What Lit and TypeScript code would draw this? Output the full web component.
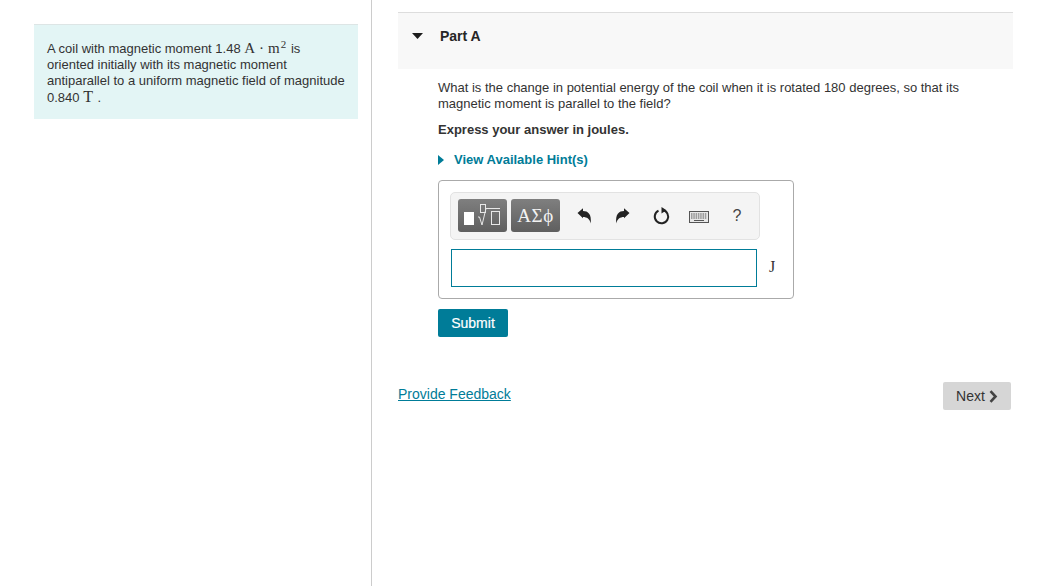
import { LitElement, html, css } from 'lit';
import { customElement } from 'lit/decorators.js';

@customElement('app-root')
export class AppRoot extends LitElement {
  static styles = css`
    :host {
      display: flex;
      width: 1038px;
      height: 586px;
      overflow: hidden;
      background: #fff;
      color: #333;
      font-family: 'Liberation Sans', Arial, sans-serif;
      font-size: 13px;
      line-height: 16px;
    }

    .left {
      box-sizing: border-box;
      width: 372px;
      height: 586px;
      flex: none;
      padding: 24px 13px 0 34px;
      border-right: 1px solid #ccc;
    }

    .intro {
      box-sizing: border-box;
      height: 95px;
      padding: 15px 13px 0;
      background: #e3f5f5;
      border-top: 1px solid #dde5e5;
    }

    .intro p {
      margin: 0;
    }

    .math {
      display: inline-block;
      height: 16px;
      line-height: 16px;
      font-family: 'Liberation Serif', 'DejaVu Serif', serif;
      font-size: 15px;
      color: #333;
    }

    .math.t {
      font-size: 16px;
      margin-right: 1px;
    }

    .dot {
      margin: 0 4px;
    }

    sup {
      display: inline-block;
      margin: -1px 1px 0 1px;
      font-size: 11px;
      line-height: 11px;
      vertical-align: top;
    }

    .right {
      flex: none;
      box-sizing: border-box;
      width: 615px;
      margin: 12px 0 0 26px;
    }

    .part-head {
      box-sizing: border-box;
      display: flex;
      height: 57px;
      padding: 15px 0 0 14px;
      gap: 17px;
      background: #f8f8f8;
      border-top: 1px solid #ddd;
      font-weight: bold;
      font-size: 14px;
      color: #262626;
    }

    .part-head svg {
      width: 11px;
      height: 6px;
      margin-top: 5px;
    }

    .part-body {
      padding: 11px 0 0 40px;
    }

    .part-body p {
      margin: 0 0 10px;
    }

    .hint {
      display: flex;
      align-items: center;
      gap: 10px;
      margin-top: 14px;
      font-weight: bold;
      color: #007c98;
    }

    .hint svg {
      width: 6px;
      height: 10px;
    }

    .answer {
      box-sizing: border-box;
      width: 356px;
      height: 119px;
      margin-top: 12px;
      padding: 11px 0 0 11px;
      border: 1px solid #aaa;
      border-radius: 4px;
    }

    .toolbar {
      box-sizing: border-box;
      display: flex;
      align-items: center;
      width: 310px;
      height: 48px;
      padding: 0 0 1px 7px;
      background: #f4f4f4;
      border: 1px solid #e2e2e2;
      border-radius: 5px;
    }

    .tpl {
      display: flex;
      align-items: center;
      justify-content: center;
      box-sizing: border-box;
      width: 49px;
      height: 33px;
      background: linear-gradient(#7f7f7f, #5f5f5f);
      border-radius: 3px;
      color: #f2f2f2;
    }

    .tpl.greek {
      margin-left: 4px;
      font-family: 'Liberation Serif', serif;
      font-size: 19px;
      letter-spacing: 0.6px;
    }

    .tool {
      display: flex;
      justify-content: center;
      align-items: center;
      width: 38px;
      height: 32px;
      color: #333;
    }

    .tool.undo {
      margin-left: 5px;
    }

    .tool.reload svg {
      margin: 1px 0 0 4px;
    }

    .tool.keys svg {
      margin: 3px 0 0 2px;
    }

    .tool.help {
      margin-left: 1px;
      font-size: 16px;
      color: #444;
    }

    .input-row {
      display: flex;
      margin-top: 9px;
      padding-left: 1px;
      gap: 12px;
    }

    .input {
      box-sizing: border-box;
      width: 306px;
      height: 38px;
      border: 1px solid #007c98;
      background: #fff;
    }

    .unit {
      font-family: 'Liberation Serif', serif;
      font-size: 16px;
      line-height: 36px;
      color: #333;
    }

    .submit {
      display: block;
      box-sizing: border-box;
      width: 70px;
      height: 28px;
      margin-top: 10px;
      padding: 0;
      border: 0;
      border-radius: 2px;
      background: #007c98;
      color: #fff;
      font: 14px/28px 'Liberation Sans', Arial, sans-serif;
      -webkit-text-stroke: 0.2px #fff;
    }

    .foot {
      display: flex;
      justify-content: space-between;
      align-items: center;
      margin-top: 45px;
      padding-right: 2px;
    }

    .foot a {
      color: #007c98;
      font-size: 14px;
      text-decoration: underline;
      margin-top: -4px;
    }

    .next {
      display: flex;
      align-items: center;
      justify-content: center;
      gap: 3px;
      box-sizing: border-box;
      width: 68px;
      height: 28px;
      background: #d6d6d6;
      border-radius: 2px;
      color: #333;
      font-size: 14px;
    }

    .next svg {
      width: 10px;
      height: 13px;
    }
  `;

  render() {
    return html`
      <div class="left">
        <div class="intro">
          <p>
            A coil with magnetic moment 1.48
            <span class="math">A<span class="dot">·</span>m<sup>2</sup></span> is oriented initially
            with its magnetic moment antiparallel to a uniform magnetic field of magnitude 0.840
            <span class="math t">T</span> .
          </p>
        </div>
      </div>
      <div class="right">
        <div class="part-head">
          <svg viewBox="0 0 11 6"><path d="M0 0h11L5.500 6z" fill="#1d1d1d" /></svg>
          <span>Part A</span>
        </div>
        <div class="part-body">
          <p>
            What is the change in potential energy of the coil when it is rotated 180 degrees, so
            that its magnetic moment is parallel to the field?
          </p>
          <p><b>Express your answer in joules.</b></p>
          <div class="hint">
            <svg viewBox="0 0 6 10"><path d="M0 0l6 5-6 5z" fill="#007c98" /></svg>
            <span>View Available Hint(s)</span>
          </div>
          <div class="answer">
            <div class="toolbar">
              <div class="tpl">
                <svg width="49" height="33" viewBox="0 0 49 33" fill="none">
                  <rect x="6" y="13" width="10" height="13" fill="#fff" />
                  <rect x="22.500" y="5.500" width="5" height="8" stroke="#e8e8e8" />
                  <path d="M20 18h1.500l2.500 8 4-16.500h14" stroke="#e8e8e8" />
                  <rect x="33.500" y="12.500" width="8" height="13" stroke="#e8e8e8" />
                </svg>
              </div>
              <div class="tpl greek">ΑΣϕ</div>
              <div class="tool undo">
                <svg width="15" height="16" viewBox="0 0 15 16">
                  <path d="M0.500 5L6 0.300V3C11 3 14.800 6 13.700 15.500 12.800 11 10 9 6 9V10.300z" fill="#222" />
                </svg>
              </div>
              <div class="tool">
                <svg width="15" height="16" viewBox="0 0 15 16">
                  <path d="M14.500 5L9 0.300V3C4 3 0.200 6 1.300 15.500 2.200 11 5 9 9 9V10.300z" fill="#222" />
                </svg>
              </div>
              <div class="tool reload">
                <svg width="18" height="18" viewBox="0 0 18 18" fill="none">
                  <path d="M5.500 3.600a6.700 6.700 0 1 0 4-.6" stroke="#222" stroke-width="2" />
                  <path d="M8.500 0l5 3.200-5 3.200z" fill="#222" />
                </svg>
              </div>
              <div class="tool keys">
                <svg width="20" height="12" viewBox="0 0 20 12" fill="none">
                  <rect x="0.500" y="0.500" width="19" height="11" fill="#e8e8e8" stroke="#555" />
                  <path d="M2 3h16M2 5h16M2 7h16" stroke="#555" stroke-dasharray="1.500 0.800" />
                  <path d="M5 9.500h10" stroke="#555" />
                </svg>
              </div>
              <div class="tool help">?</div>
            </div>
            <div class="input-row">
              <div class="input"></div>
              <span class="unit">J</span>
            </div>
          </div>
          <button class="submit">Submit</button>
        </div>
        <div class="foot">
          <a>Provide Feedback</a>
          <div class="next">
            <span>Next</span>
            <svg viewBox="0 0 10 13" fill="none">
              <path d="M2.500 1.200l5 5.300-5 5.300" stroke="#444" stroke-width="2.600" />
            </svg>
          </div>
        </div>
      </div>
    `;
  }
}
